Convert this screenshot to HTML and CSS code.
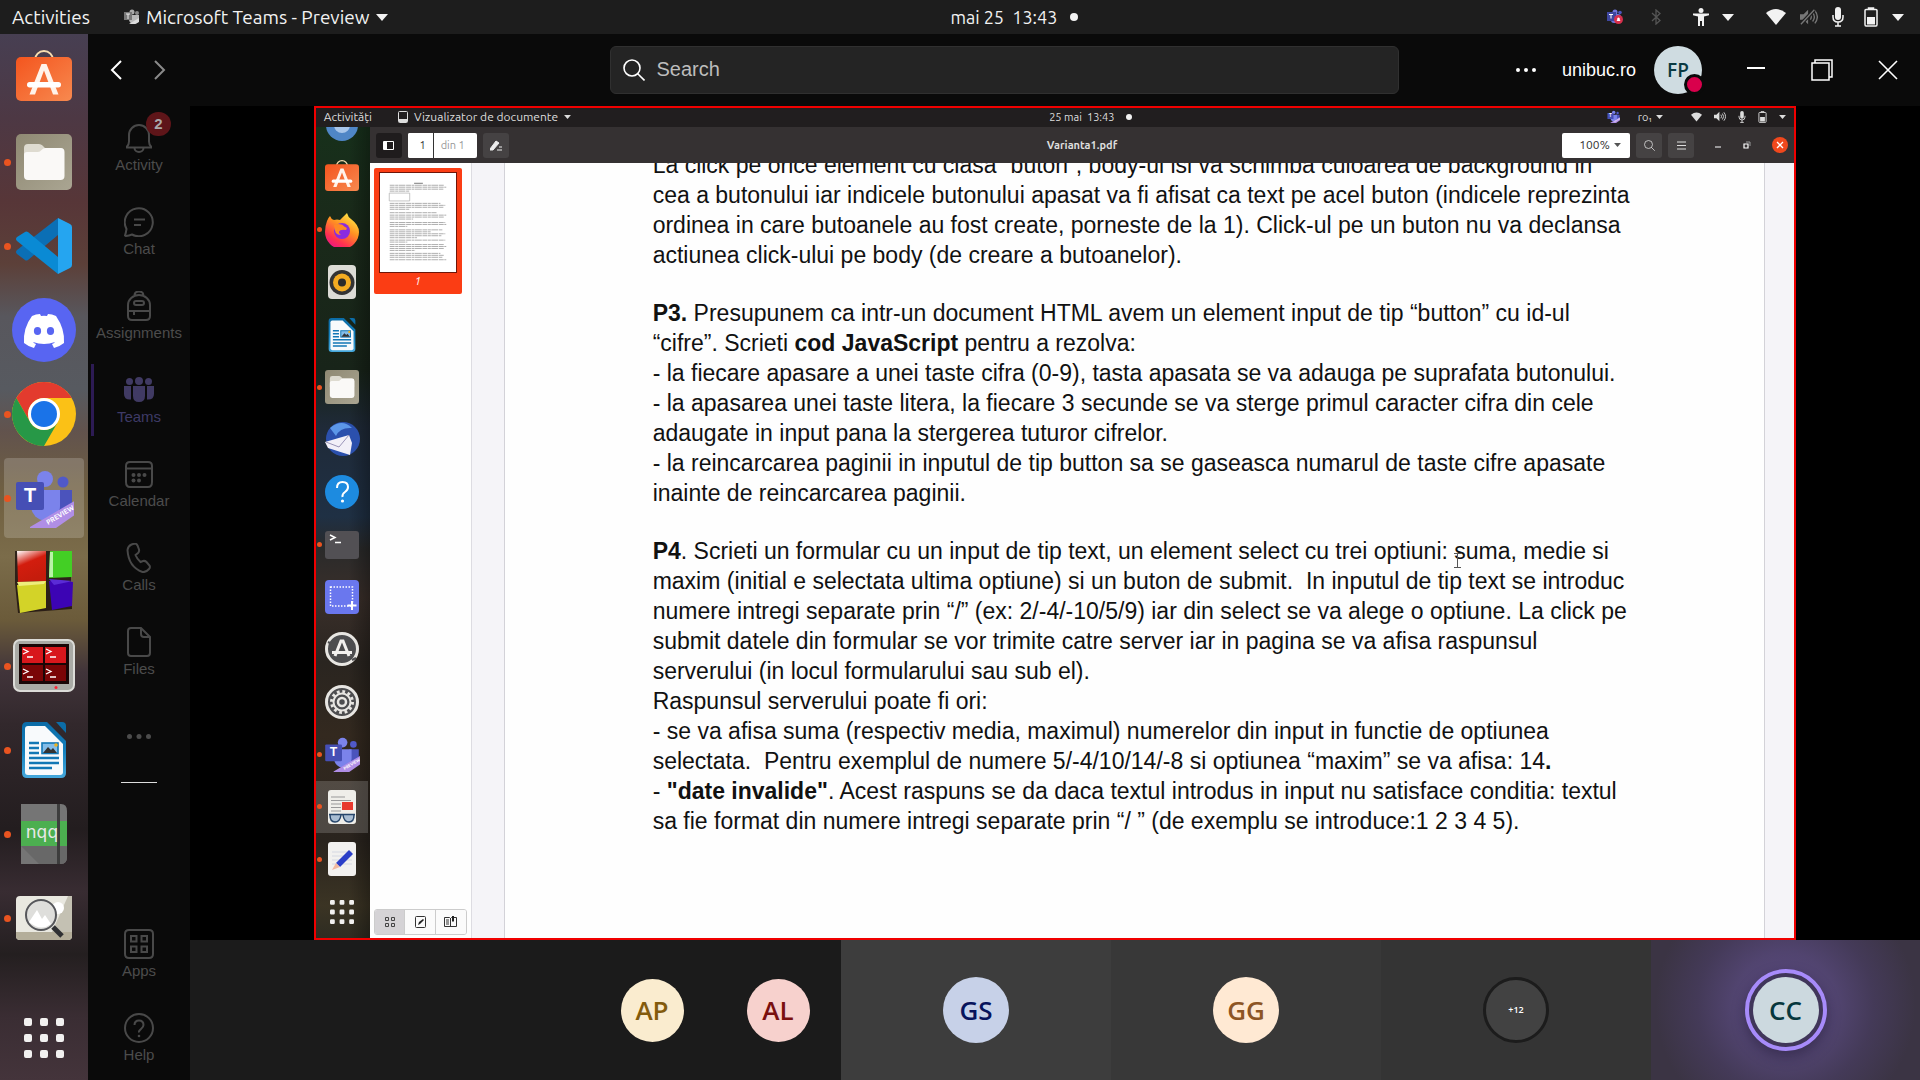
FILE: index.html
```html
<!DOCTYPE html>
<html lang="en">
<head>
<meta charset="utf-8">
<title>Microsoft Teams - Preview</title>
<link rel="stylesheet" href="styles.css">
</head>
<body>
<svg class="defs" width="0" height="0" aria-hidden="true">
  <defs>
    <linearGradient id="g-bag" x1="0" y1="0" x2="1" y2="1"><stop offset="0" stop-color="#f4551e"/><stop offset="1" stop-color="#f7894f"/></linearGradient>
    <linearGradient id="g-files" x1="0" y1="0" x2="1" y2="1"><stop offset="0" stop-color="#8f8973"/><stop offset="1" stop-color="#aaa592"/></linearGradient>
    <linearGradient id="g-writer" x1="0" y1="0" x2="0" y2="1"><stop offset="0" stop-color="#0b6ba6"/><stop offset=".5" stop-color="#1480bd"/><stop offset="1" stop-color="#45a8dc"/></linearGradient>
    <linearGradient id="g-fox" x1=".8" y1="0" x2=".2" y2="1"><stop offset="0" stop-color="#fff04a"/><stop offset=".4" stop-color="#ff9222"/><stop offset=".75" stop-color="#ff3150"/><stop offset="1" stop-color="#e8118b"/></linearGradient>
    <linearGradient id="g-red" x1="0" y1="0" x2=".4" y2="1"><stop offset="0" stop-color="#fff"/><stop offset=".45" stop-color="#d31d0e"/><stop offset="1" stop-color="#c41c0c"/></linearGradient>
    <symbol id="i-software" viewBox="0 4 56 56">
      <path d="M19 13a9 9 0 0 1 18 0" fill="none" stroke="#f8ddb0" stroke-width="2" transform="translate(0 1)"/>
      <rect y="11" width="56" height="44" rx="5" fill="url(#g-bag)"/>
      <path d="M13.500 48.500 25.500 18h5l12 30.500h-5.500L28 24.500 19 48.500z" fill="#fff3ea"/>
      <rect x="11" y="36" width="34" height="5.500" rx="2.700" fill="#fff"/>
    </symbol>
    <symbol id="i-files" viewBox="0 0 56 56">
      <rect width="56" height="56" rx="5" fill="url(#g-files)"/>
      <path d="M8 14q0-4 4-4h11q2 0 3.500 1.500L29 14h15q4 0 4 4v10H8z" fill="#dedbd0"/>
      <path d="M8 21q0-3 3-3h11q2 0 3.500-2 2-2 4-2h15q4 0 4 4v24q0 4-4 4H12q-4 0-4-4z" fill="#faf9f7"/>
    </symbol>
    <symbol id="i-writer" viewBox="0 0 56 56">
      <path d="M11 0h20l19 19v32q0 5-5 5H11q-5 0-5-5V5q0-5 5-5z" fill="url(#g-writer)"/>
      <path d="M12 4h17l18 18v28q0 3-3 3H12q-3 0-3-3V7q0-3 3-3z" fill="#f8fafc"/>
      <path d="M40 0h6q4 0 4 4v7z" fill="#0c6da8"/>
      <path d="M13 21h10M13 26h10M13 31h10M13 36h30M13 41h30M13 46h23" stroke="#1277b5" stroke-width="2.500"/>
      <rect x="26" y="21" width="16" height="10.500" fill="#84bde8" stroke="#1277b5" stroke-width="1.600"/>
      <path d="m27 31 5-6 3 3 2-2 4 5z" fill="#333"/><circle cx="40" cy="23" r="1.800" fill="#f0b21c"/>
    </symbol>
    <symbol id="i-teams" viewBox="0 0 60 60">
      <circle cx="31" cy="11" r="8" fill="#7b83eb"/><circle cx="49" cy="14" r="5.500" fill="#5059c9"/>
      <path d="M42 22h16v18q0 8-8 9h-8z" fill="#4b53bc"/>
      <path d="M17 22h29v16a14.500 14.500 0 0 1-29 0z" fill="#7b83eb"/>
      <rect x="2" y="14" width="28" height="28" rx="2" fill="#464fb5"/>
      <text x="16" y="34" class="glyph-t">T</text>
      <path d="M16 59 62 32v14L42 60H16z" fill="#b08ee6"/>
      <text x="34" y="57" class="glyph-preview" transform="rotate(-31 34 57)">PREVIEW</text>
    </symbol>
    <symbol id="i-tri" viewBox="0 0 12 7"><path d="M0 0h12L6 7z" fill="currentColor"/></symbol>
    <symbol id="i-wifi" viewBox="0 0 20 16"><path d="M10 16 0 4q10-8 20 0z" fill="currentColor"/></symbol>
    <symbol id="i-mic" viewBox="0 0 12 20"><rect x="3" width="6" height="13" rx="3" fill="currentColor"/><path d="M1 8v2q0 5 5 5t5-5V8M6 15v4M3 19h6" fill="none" stroke="currentColor" stroke-width="1.500"/></symbol>
    <symbol id="i-battery" viewBox="0 0 14 20"><path d="M4.500 2.500V1h5v1.500M2 2.500h10q1 0 1 1v14q0 1.500-1 1.500H2q-1 0-1-1.500v-14q0-1 1-1z" fill="none" stroke="currentColor" stroke-width="1.500"/><path d="M3 10h8v7.500H3z" fill="currentColor"/></symbol>
    <symbol id="i-sound" viewBox="0 0 20 18"><path d="M0 6h4l5-5v16l-5-5H0z" fill="currentColor"/><path d="M11.500 6q2 3 0 6M14 4q4 5 0 10M16.500 2q5.500 7 0 14" fill="none" stroke="currentColor" stroke-width="1.500"/></symbol>
    <symbol id="i-dots9" viewBox="0 0 40 40"><path d="M2 0h4q2 0 2 2v4q0 2-2 2H2Q0 8 0 6V2q0-2 2-2zm16 0h4q2 0 2 2v4q0 2-2 2h-4q-2 0-2-2V2q0-2 2-2zm16 0h4q2 0 2 2v4q0 2-2 2h-4q-2 0-2-2V2q0-2 2-2zM2 16h4q2 0 2 2v4q0 2-2 2H2q-2 0-2-2v-4q0-2 2-2zm16 0h4q2 0 2 2v4q0 2-2 2h-4q-2 0-2-2v-4q0-2 2-2zm16 0h4q2 0 2 2v4q0 2-2 2h-4q-2 0-2-2v-4q0-2 2-2zM2 32h4q2 0 2 2v4q0 2-2 2H2q-2 0-2-2v-4q0-2 2-2zm16 0h4q2 0 2 2v4q0 2-2 2h-4q-2 0-2-2v-4q0-2 2-2zm16 0h4q2 0 2 2v4q0 2-2 2h-4q-2 0-2-2v-4q0-2 2-2z" fill="#f2f1f0"/></symbol>
    <symbol id="i-search" viewBox="0 0 22 22"><circle cx="9" cy="9" r="8" fill="none" stroke="currentColor" stroke-width="1.600"/><path d="m14.500 14.500 7 7" stroke="currentColor" stroke-width="1.600"/></symbol>
  </defs>
</svg>

<header class="topbar">
  <div class="topbar-left">
    <button class="plain">Activities</button>
    <button class="plain app-menu">
      <svg width="16" height="16" viewBox="0 0 16 16"><circle cx="8" cy="3" r="2.500" fill="#aaa"/><circle cx="13" cy="4" r="2" fill="#888"/><path d="M6 6h9v5q-1 4-5 4t-5-4z" fill="#b8b8b8"/><rect y="3" width="8" height="8" fill="#777"/><path d="M2 5h4M4 5v5" stroke="#eee"/><path d="m5 15 10-6v4l-4 2z" fill="#ddd"/></svg>
      <span>Microsoft Teams - Preview</span>
      <svg width="12" height="7"><use href="#i-tri"/></svg>
    </button>
  </div>
  <div class="clock"><span>mai 25&nbsp; 13:43</span><i class="clock-dot"></i></div>
  <div class="tray">
    <svg width="16" height="16" viewBox="0 0 16 16"><circle cx="8" cy="3" r="2.500" fill="#6f76dc"/><circle cx="13" cy="3.500" r="1.800" fill="#4d55bd"/><rect x="4" y="5" width="10" height="9" rx="3" fill="#6a72d8"/><rect y="3" width="9" height="9" fill="#3f479f"/><path d="M2 5.500h4M4 5.500v4" stroke="#fff"/><circle cx="11.500" cy="10.500" r="4.500" fill="#d8304c"/><path d="M9.500 12h4l-.7-1V9.500q-1.300-2-2.600 0V11z" fill="#fff"/></svg>
    <svg class="dim bt" width="10" height="16" viewBox="0 0 10 16"><path d="m1 4 8 7.500L5 15V1l4 3.500L1 12" fill="none" stroke="currentColor" stroke-width="1.300"/></svg>
    <span class="tray-group">
      <svg width="16" height="18" viewBox="0 0 16 18"><circle cx="8" cy="2.500" r="2.500" fill="currentColor"/><path d="M0 5.500h16v1.700l-5 1.300V18H9v-5H7v5H5V8.500L0 7.200z" fill="currentColor"/></svg>
      <svg width="12" height="7"><use href="#i-tri"/></svg>
    </span>
    <span class="tray-group system">
      <svg width="20" height="16"><use href="#i-wifi"/></svg>
      <svg class="dim" width="18" height="18" viewBox="0 0 20 18"><use href="#i-sound" width="20" height="18"/><path d="M1 17 16 1" stroke="#1d1d1d" stroke-width="4"/><path d="M1 17 16 1" stroke="currentColor" stroke-width="1.500"/></svg>
      <svg class="tray-mic" width="12" height="20"><use href="#i-mic"/></svg>
      <svg width="14" height="20"><use href="#i-battery"/></svg>
      <svg width="12" height="7"><use href="#i-tri"/></svg>
    </span>
  </div>
</header>

<div class="desktop">
  <nav class="dock" aria-label="Dock">
    <button class="dock-item" aria-label="Ubuntu Software"><svg width="56" height="56"><use href="#i-software"/></svg></button>
    <button class="dock-item running" aria-label="Files"><svg width="56" height="56"><use href="#i-files"/></svg></button>
    <button class="dock-item running" aria-label="Visual Studio Code"><svg width="56" height="56" viewBox="0 0 56 56"><path d="M42 0v17L12 42q-2 1-3 0l-8-6q-2-2 0-4z" fill="#0b6fb5"/><path d="M42 56V39L12 14q-2-1-3 0l-8 5q-2 2 0 4z" fill="#0a8ad4"/><path d="M42 0l12 6q2 1 2 3v38q0 2-2 3l-12 6z" fill="#25a5f0"/></svg></button>
    <button class="dock-item" aria-label="Discord"><svg width="64" height="64" viewBox="0 0 64 64"><circle cx="32" cy="32" r="32" fill="#5865f2"/><path d="M20 18q4-2 8-2l1 2q3-.5 6 0l1-2q4 0 8 2 9 13 8 27-5 4-10 5l-2-4q2-.5 3-2-11 4-22 0 1 1.500 3 2l-2 4q-5-1-10-5-1-15 8-27z" fill="#fff"/><ellipse cx="25.500" cy="33" rx="3.600" ry="4" fill="#5865f2"/><ellipse cx="38.500" cy="33" rx="3.600" ry="4" fill="#5865f2"/></svg></button>
    <button class="dock-item running" aria-label="Chrome"><svg width="64" height="64" viewBox="0 0 64 64"><circle cx="32" cy="32" r="32" fill="#fbc116"/><path d="M4.300 16A32 32 0 0 1 59.700 16H32a16 16 0 0 0-13.900 24z" fill="#e33b2e"/><path d="M4.300 16 18.100 40A16 16 0 0 0 45.900 40L32 64A32 32 0 0 1 4.300 16z" fill="#279847"/><circle cx="32" cy="32" r="16" fill="#fff"/><circle cx="32" cy="32" r="13" fill="#1a73e8"/></svg></button>
    <button class="dock-item running active" aria-label="Microsoft Teams"><svg width="60" height="60"><use href="#i-teams"/></svg></button>
    <button class="dock-item" aria-label="Code::Blocks"><svg class="cubes" width="60" height="64" viewBox="0 0 60 64"><path d="M1 1h56v30l1 28-54 4-3-30z" fill="#150a0a" opacity=".75"/><path d="M3 1h29v30L4 32z" fill="url(#g-red)"/><path d="M36 1h22v26l-23 1z" fill="#43cf25"/><path d="m36 2h3v25h-4z" fill="#b9f2a8"/><path d="m3 35 29-4v27L6 63z" fill="#d3d328"/><path d="m3 32 29-1-2 3-25 2z" fill="#eeee7c"/><path d="m35 31 24 1-1 24-20 4z" fill="#3c04b4"/><path d="m35 29 24 2-19 4z" fill="#5a2bd6"/></svg></button>
    <button class="dock-item running" aria-label="Terminator"><svg width="62" height="54" viewBox="0 0 62 54"><rect x="1" y="1" width="60" height="51" rx="6" fill="#a9aaa5" stroke="#dcdcd8" stroke-width="2"/><rect x="6" y="5" width="50" height="40" fill="#190606"/><path d="M9 8h21v16H9zM32 8h21v16H32z" fill="#d8171c"/><path d="M9 26h21v16H9zM32 26h21v16H32z" fill="#7a0506"/><path d="m10 10 5 2.500-5 2.500M14 18h6M33 10l5 2.500-5 2.500M37 18h6M10 30l5 2.500-5 2.500M14 38h6M33 30l5 2.500-5 2.500M37 38h6" fill="none" stroke="#fff" stroke-width="1.300"/><circle cx="43" cy="48.500" r="1.500" fill="#f23"/></svg></button>
    <button class="dock-item running" aria-label="LibreOffice Writer"><svg width="56" height="56"><use href="#i-writer"/></svg></button>
    <button class="dock-item running" aria-label="nqq"><svg width="46" height="60" viewBox="0 0 46 60"><path d="M0 0h40q6 0 6 7v46q0 7-6 7H0z" fill="#757575"/><path d="M0 42h46v11q0 7-6 7H18z" fill="#686868"/><path d="M0 17h46v25H0z" fill="#4caf50"/><path d="M36 0h3v60h-3z" fill="#3d3d3d"/><text x="21" y="34" class="glyph-nqq">nqq</text></svg></button>
    <button class="dock-item running" aria-label="Image Viewer"><svg width="56" height="44" viewBox="0 0 56 44"><rect width="56" height="44" rx="4" fill="#e9e8e0"/><path d="m36 36 16-36h4v36z" fill="#c4c1b3"/><path d="M0 36h56v4q0 4-4 4H4q-4 0-4-4z" fill="#b4ae9a"/><circle cx="42" cy="12" r="6" fill="#fff"/><circle cx="25" cy="19" r="15" fill="#dededb" stroke="#55565a" stroke-width="2"/><path d="m13 26 8-12 5 9 3-4 6 9q-10 8-22-2z" fill="#fff"/><path d="m37 31 9 9" stroke="#2f3033" stroke-width="5"/></svg></button>
    <button class="dock-item show-apps" aria-label="Show Applications"><svg width="40" height="40"><use href="#i-dots9"/></svg></button>
  </nav>

  <div class="teams">
    <header class="teams-header">
      <div class="history">
        <button class="plain" aria-label="Back"><svg width="12" height="20" viewBox="0 0 12 20"><path d="m11 1-9 9 9 9" fill="none" stroke="#fff" stroke-width="2"/></svg></button>
        <button class="plain" aria-label="Forward"><svg width="12" height="20" viewBox="0 0 12 20"><path d="m1 1 9 9-9 9" fill="none" stroke="#8a8a8a" stroke-width="2"/></svg></button>
      </div>
      <label class="search"><svg width="22" height="22"><use href="#i-search"/></svg><input type="text" placeholder="Search" aria-label="Search"></label>
      <div class="account">
        <button class="plain" aria-label="More"><svg width="20" height="4" viewBox="0 0 20 4"><path d="M0 2a2 2 0 0 1 4 0 2 2 0 0 1-4 0m8 0a2 2 0 0 1 4 0 2 2 0 0 1-4 0m8 0a2 2 0 0 1 4 0 2 2 0 0 1-4 0" fill="#fff"/></svg></button>
        <span class="tenant">unibuc.ro</span>
        <button class="avatar me">FP<i class="presence"></i></button>
        <div class="window-controls">
          <button class="plain" aria-label="Minimize"><svg width="20" height="22" viewBox="0 0 20 22"><path d="M1 9h18" stroke="#fff" stroke-width="2"/></svg></button>
          <button class="plain" aria-label="Restore"><svg width="22" height="22" viewBox="0 0 22 22"><path d="M1 4h17v17H1zM4 4V1h17v17h-3" fill="none" stroke="#fff" stroke-width="1.500"/></svg></button>
          <button class="plain" aria-label="Close"><svg width="20" height="20" viewBox="0 0 20 20"><path d="m1 1 18 18M19 1 1 19" stroke="#fff" stroke-width="1.600"/></svg></button>
        </div>
      </div>
    </header>

    <div class="teams-body">
      <nav class="rail" aria-label="Teams">
        <button class="rail-item"><span class="rail-icon"><svg width="30" height="30" viewBox="0 0 30 30"><path d="M3 24.500v-1q2-2 2-5V12a10 10 0 0 1 20 0v6.500q0 3 2 5v1zM10.500 25a4.500 4 0 0 0 9 0"/></svg><b class="badge">2</b></span>Activity</button>
        <button class="rail-item"><span class="rail-icon"><svg width="30" height="30" viewBox="0 0 30 30"><path d="M2 29 1 28.500q1-3 1.500-6.500a14 14 0 1 1 5.500 5.500Q5 28.700 2 29zM10 12.500h11M10 18h7"/></svg></span>Chat</button>
        <button class="rail-item"><span class="rail-icon"><svg width="30" height="30" viewBox="0 0 30 30"><path d="M4 14a11 10 0 0 1 22 0v11q0 4-4 4H8q-4 0-4-4zM10.500 4.500q0-4 4.500-4t4.500 4M10 12q0-2 2-2h6q2 0 2 2t-2 2h-6q-2 0-2-2zM4 20h22M10 20v4"/></svg></span>Assignments</button>
        <button class="rail-item selected"><span class="rail-icon"><svg width="30" height="30" viewBox="0 0 30 30"><circle cx="15" cy="6" r="4"/><circle cx="5.500" cy="6.500" r="3.500"/><circle cx="24.500" cy="6.500" r="3.500"/><path d="M9 11h12v10q0 6-6 6t-6-6zM0 11h7v13.500Q0 25 0 19zM23 11h7v8q0 6-7 5.500z"/></svg></span>Teams</button>
        <button class="rail-item"><span class="rail-icon"><svg width="30" height="30" viewBox="0 0 30 30"><path d="M6 3h18q4 0 4 4v16q0 5-4 5H6q-4 0-4-5V7q0-4 4-4zM2 9.500h26"/><g class="solid"><circle cx="9.500" cy="16" r="2"/><circle cx="15" cy="16" r="2"/><circle cx="20.500" cy="16" r="2"/><circle cx="9.500" cy="21.500" r="2"/><circle cx="15" cy="21.500" r="2"/></g></svg></span>Calendar</button>
        <button class="rail-item"><span class="rail-icon"><svg width="30" height="30" viewBox="0 0 30 30"><path d="m7.500 1.500 3-1q2 0 3 2l1.500 4q.5 2-1 3.500L11.500 12q1.500 4 5 7l2.500-1q2-.5 3.500 1l3 3.500q1 2-.5 3.500-3 3.500-6.500 3-14-5-15-22 .5-4 4-5.500z"/></svg></span>Calls</button>
        <button class="rail-item"><span class="rail-icon"><svg width="30" height="30" viewBox="0 0 30 30"><path d="M7 1h10l9 9v16q0 3-3 3H7q-3 0-3-3V4q0-3 3-3zM17 1v6q0 3 3 3h6"/></svg></span>Files</button>
        <button class="rail-more" aria-label="More apps"><svg width="24" height="5" viewBox="0 0 24 5"><circle cx="2.500" cy="2.500" r="2.500"/><circle cx="12" cy="2.500" r="2.500"/><circle cx="21.500" cy="2.500" r="2.500"/></svg></button>
        <hr class="rail-rule">
        <button class="rail-item rail-bottom"><span class="rail-icon"><svg width="30" height="30" viewBox="0 0 30 30"><path d="M5 1h20q4 0 4 4v20q0 4-4 4H5q-4 0-4-4V5q0-4 4-4zM7 7h5.500v5.500H7zM17.500 7H23v5.500h-5.500zM7 17.500h5.500V23H7zM17.500 17.500H23V23h-5.500z"/></svg></span>Apps</button>
        <button class="rail-item"><span class="rail-icon"><svg width="30" height="30" viewBox="0 0 30 30"><circle cx="15" cy="15" r="14"/><path d="M10.500 12q0-4.500 4.500-4.500t4.500 4.500q0 2-2.500 4t-2 3.500"/><circle class="solid" cx="15" cy="23" r="1.300"/></svg></span>Help</button>
      </nav>

      <main class="call">
        <section class="stage">
          <div class="shared" lang="ro">
            <div class="s-topbar">
              <div class="s-left"><span>Activităţi</span><span class="s-app"><svg width="10" height="12" viewBox="0 0 10 12"><rect x=".5" y=".5" width="9" height="11" rx="1" fill="none" stroke="#ddd"/><path d="M1 8h8v3H1z" fill="#ddd"/></svg><span>Vizualizator de documente</span><svg width="7" height="4" viewBox="0 0 12 7"><use href="#i-tri"/></svg></span></div>
              <div class="s-clock"><span>25 mai&nbsp; 13:43</span><i class="clock-dot small"></i></div>
              <div class="s-tray">
                <svg class="s-teams" width="13" height="13" viewBox="0 0 60 60"><use href="#i-teams" width="60" height="60"/></svg>
                <span class="s-lang">ro₁ <svg width="7" height="4" viewBox="0 0 12 7"><use href="#i-tri"/></svg></span>
                <svg width="11" height="10"><use href="#i-wifi"/></svg>
                <svg width="12" height="11"><use href="#i-sound"/></svg>
                <svg width="8" height="12"><use href="#i-mic"/></svg>
                <svg width="9" height="12"><use href="#i-battery"/></svg>
                <svg width="7" height="4" viewBox="0 0 12 7"><use href="#i-tri"/></svg>
              </div>
            </div>
            <div class="s-main">
              <div class="s-dock">
                <span class="s-partial"><svg width="32" height="32" viewBox="0 0 32 32"><circle cx="16" cy="16" r="16" fill="#4f86c6"/><circle cx="16" cy="16" r="8" fill="#a8c6ea"/></svg></span>
                <span class="s-item"><svg width="34" height="34"><use href="#i-software"/></svg></span>
                <span class="s-item running"><svg width="34" height="34" viewBox="0 0 34 34"><path d="M2 8q1-3 3-5 1 3 4 4 3-1 6 0 4-4 7-7 1 4 4 6 8 6 8 13a17 17 0 0 1-34 0Q0 13 2 8z" fill="url(#g-fox)"/><circle cx="17" cy="18" r="8" fill="#8a2be0"/><path d="M9 12q7-3 11 2 3 1 1 3-6-1-7 2 0 2 2 3-7 0-7-10z" fill="#ff8a24"/></svg></span>
                <span class="s-item"><svg width="28" height="34" viewBox="0 0 28 34"><rect width="28" height="34" rx="4" fill="#dcdcd6"/><circle cx="14" cy="17.500" r="12.500" fill="#333"/><circle cx="14" cy="17.500" r="9" fill="#f4ac22"/><circle cx="14" cy="17.500" r="4" fill="#2b2b2b"/></svg></span>
                <span class="s-item"><svg width="34" height="34"><use href="#i-writer"/></svg></span>
                <span class="s-item running"><svg width="34" height="34"><use href="#i-files"/></svg></span>
                <span class="s-item"><svg width="36" height="36" viewBox="0 0 36 36"><circle cx="19" cy="17" r="17" fill="#2b50ad"/><path d="M6 6q12-10 22 0-12-1-16 8z" fill="#5c97e8"/><path d="m1 20 24-7 3 8-2 12L4 26z" fill="#f2f0f8"/><path d="m2 20 13 5 10-12" fill="none" stroke="#9a94b8"/></svg></span>
                <span class="s-item"><svg width="34" height="34" viewBox="0 0 34 34"><circle cx="17" cy="17" r="17" fill="#1d8be0"/><path d="M12 13q0-6 5.500-6t5.500 5q0 3-3 5t-2.500 5" fill="none" stroke="#fff" stroke-width="2"/><circle cx="17.500" cy="26" r="1.600" fill="#fff"/></svg></span>
                <span class="s-item running"><svg width="34" height="28" viewBox="0 0 34 28"><rect width="34" height="28" rx="3" fill="#525054"/><path d="m5 4 5 2.500L5 9M10 11.500h6" fill="none" stroke="#fff" stroke-width="1.500"/></svg></span>
                <span class="s-item"><svg width="34" height="34" viewBox="0 0 34 34"><rect width="34" height="34" rx="4" fill="#6a77ee"/><path d="M5.500 7h22v19h-22z" fill="none" stroke="#fff" stroke-width="1.500" stroke-dasharray="1.500 1.500"/><path d="M27 21v9M22.500 25.500h9" stroke="#fff" stroke-width="2"/></svg></span>
                <span class="s-item"><svg width="34" height="34" viewBox="0 0 34 34"><circle cx="17" cy="17" r="15.500" fill="#4d4d4f" stroke="#e8e6e2" stroke-width="3"/><path d="m3 10 4 2M27 28l4-2" stroke="#4d4d4f" stroke-width="2"/><path d="m10 24 6-15h2l6 15M7 20.500h20" fill="none" stroke="#f2f0ee" stroke-width="3"/></svg></span>
                <span class="s-item"><svg width="34" height="34" viewBox="0 0 34 34"><circle cx="17" cy="17" r="15.500" fill="#4d4d4f" stroke="#e8e6e2" stroke-width="3"/><circle cx="17" cy="17" r="10.500" fill="none" stroke="#e8e6e2" stroke-width="3" stroke-dasharray="2.750 2.750"/><circle cx="17" cy="17" r="8.500" fill="none" stroke="#e8e6e2" stroke-width="2"/><circle cx="17" cy="17" r="4" fill="none" stroke="#e8e6e2" stroke-width="2.500"/></svg></span>
                <span class="s-item running"><svg width="36" height="36"><use href="#i-teams"/></svg></span>
                <span class="s-item running current"><svg width="28" height="34" viewBox="0 0 28 34"><rect width="28" height="34" rx="3" fill="#efeee9"/><path d="M3 7h14M3 10.500h20M3 14h10M3 17.500h10M3 21h10" stroke="#999"/><path d="M14 12h11v8H14z" fill="#e8392e"/><path d="M1 24.500h26M2 25q0 7 5 7t6-7M15 25q1 7 6 7t5-7" fill="#a9bdd2" stroke="#27466b" stroke-width="1.500"/></svg></span>
                <span class="s-item running"><svg width="28" height="34" viewBox="0 0 28 34"><rect width="28" height="34" rx="3" fill="#f2f1ef"/><path d="M4 10h20M4 14h20M4 18h20M4 22h20" stroke="#d5d8e2"/><path d="m8 21 13-13 4 4-13 13z" fill="#2b3fc8"/><path d="m8 21 4 4-8 3z" fill="#f0b8a0"/></svg></span>
                <span class="s-item"><svg width="24" height="24"><use href="#i-dots9"/></svg></span>
              </div>
              <div class="viewer">
                <div class="v-header">
                  <div class="v-left">
                    <button class="v-btn pressed" aria-label="Panou lateral"><svg width="11" height="9" viewBox="0 0 11 9"><path d="M.5.500h10v8H.5z" fill="none" stroke="#fff"/><path d="M1 1h3v7H1z" fill="#fff"/></svg></button>
                    <span class="v-pages"><input type="text" value="1" aria-label="Pagina"><span>din 1</span></span>
                    <button class="v-btn" aria-label="Adnotare"><svg width="12" height="11" viewBox="0 0 12 11"><path d="m0 9 6-8 3 2-6 7H0zM7 10h5M9 7h3" fill="#eee" stroke="#eee"/></svg></button>
                  </div>
                  <strong>Varianta1.pdf</strong>
                  <div class="v-right">
                    <span class="v-zoom"><select aria-label="Zoom"><option>100%</option></select><svg width="7" height="4" viewBox="0 0 12 7"><use href="#i-tri"/></svg></span>
                    <button class="v-btn" aria-label="Caută"><svg width="11" height="11"><use href="#i-search"/></svg></button>
                    <button class="v-btn" aria-label="Meniu"><svg width="9" height="9" viewBox="0 0 9 9"><path d="M0 1h9M0 4.500h9M0 8h9" stroke="#ddd"/></svg></button>
                    <span class="v-controls">
                      <button class="plain" aria-label="Minimizează"><svg width="8" height="8" viewBox="0 0 8 8"><path d="M1 6h6" stroke="#fff"/></svg></button>
                      <button class="plain" aria-label="Restaurează"><svg width="8" height="8" viewBox="0 0 8 8"><path d="M1 3h4v4H1z" fill="none" stroke="#fff" stroke-width="1.200"/><path d="M3 1h4v4" fill="none" stroke="#999"/></svg></button>
                      <button class="plain" aria-label="Închide"><svg width="16" height="16" viewBox="0 0 16 16"><circle cx="8" cy="8" r="8" fill="#f0481d"/><path d="m5 5 6 6M11 5l-6 6" stroke="#fff" stroke-width="1.300"/></svg></button>
                    </span>
                  </div>
                </div>
                <div class="v-body">
                  <aside class="v-side">
                    <figure class="thumb">
                      <svg viewBox="0 0 78 101" preserveAspectRatio="none"><rect width="78" height="101" fill="#fff"/><path d="M35 10.500h9" stroke="#777"/><path d="M9.500 20.500h21v8h-21z" fill="none" stroke="#aaa" stroke-width=".7"/><path d="M10 12.500h56M10 14.500h58M10 16.500h55M10 18.500h20M10 31h52M10 33h57M10 35h55M10 37h20M10 40.500h48M10 43h58M10 45h56M10 47h24M10 50.500h57M10 52.500h58M10 54.500h18M10 58h54M10 60h42M10 62h57M10 64h53M10 66h28M10 68.500h57M10 70.500h18M10 73h56M10 75h58M10 77h56M10 79h26M10 82h52M10 84h56M10 86h54M10 88.500h58" stroke="#999" stroke-width=".8" stroke-dasharray="5 .6 3 .5 7 .7"/></svg>
                      <figcaption>1</figcaption>
                    </figure>
                    <div class="v-switch">
                      <button class="on" aria-label="Miniaturi"><svg width="10" height="10" viewBox="0 0 10 10"><path d="M.5.500h3v3h-3zM6.500.500h3v3h-3zM.5 6.500h3v3h-3zM6.500 6.500h3v3h-3z" fill="none" stroke="#444"/></svg></button>
                      <button aria-label="Adnotări"><svg width="11" height="12" viewBox="0 0 11 12"><rect x=".5" y=".5" width="10" height="11" rx="1" fill="none" stroke="#333"/><path d="m3 9 1-3 4-3 1 1-4 4z" fill="#222"/></svg></button>
                      <button aria-label="Semne de carte"><svg width="13" height="12" viewBox="0 0 13 12"><path d="M.5 1.500h5l1 1 1-1h5v9H.5zM6.500 2v9" fill="none" stroke="#333"/><path d="M2 4h3M2 6h3M2 8h3" stroke="#333"/><path d="M8 0h2v6L9 5 8 6z" fill="#222"/></svg></button>
                    </div>
                  </aside>
                  <div class="v-canvas">
                    <article class="sheet">
                      <p>La click pe orice element cu clasa “buton”, body-ul isi va schimba culoarea de background in<br>cea a butonului iar indicele butonului apasat va fi afisat ca text pe acel buton (indicele reprezinta<br>ordinea in care butoanele au fost create, porneste de la 1). Click-ul pe un buton nu va declansa<br>actiunea click-ului pe body (de creare a butoanelor).</p>
                      <p><b>P3.</b> Presupunem ca intr-un document HTML avem un element input de tip “button” cu id-ul<br>“cifre”. Scrieti <b>cod JavaScript</b> pentru a rezolva:<br>- la fiecare apasare a unei taste cifra (0-9), tasta apasata se va adauga pe suprafata butonului.<br>- la apasarea unei taste litera, la fiecare 3 secunde se va sterge primul caracter cifra din cele<br>adaugate in input pana la stergerea tuturor cifrelor.<br>- la reincarcarea paginii in inputul de tip button sa se gaseasca numarul de taste cifre apasate<br>inainte de reincarcarea paginii.</p>
                      <p><b>P4</b>. Scrieti un formular cu un input de tip text, un element select cu trei optiuni: <span class="pointer-at">suma<svg class="ibeam" width="7" height="15" viewBox="0 0 7 15"><path d="M0 .5h7M0 14.500h7M3.500 0v15" stroke="#555"/></svg></span>, medie si<br>maxim (initial e selectata ultima optiune) si un buton de submit.&nbsp; In inputul de tip text se introduc<br>numere intregi separate prin “/” (ex: 2/-4/-10/5/9) iar din select se va alege o optiune. La click pe<br>submit datele din formular se vor trimite catre server iar in pagina se va afisa raspunsul<br>serverului (in locul formularului sau sub el).<br>Raspunsul serverului poate fi ori:<br>- se va afisa suma (respectiv media, maximul) numerelor din input in functie de optiunea<br>selectata.&nbsp; Pentru exemplul de numere 5/-4/10/14/-8 si optiunea “maxim” se va afisa: 14<b>.</b><br>- <b>"date invalide"</b>. Acest raspuns se da daca textul introdus in input nu satisface conditia: textul<br>sa fie format din numere intregi separate prin “/ ” (de exemplu se introduce:1 2 3 4 5).</p>
                    </article>
                  </div>
                </div>
              </div>
            </div>
          </div>
        </section>

        <footer class="people">
          <div class="audio-only"><span class="slot"><span class="avatar ap">AP</span></span><span class="slot"><span class="avatar al">AL</span></span></div>
          <div class="tile t1"><span class="avatar big gs">GS</span></div>
          <div class="tile t2"><span class="avatar big gg">GG</span></div>
          <div class="tile t3"><button class="avatar big more">+12</button></div>
          <div class="tile t4"><span class="speaking"><span class="avatar big cc">CC</span></span></div>
        </footer>
      </main>
    </div>
  </div>
</div>
</body>
</html>
```
FILE: styles.css
```css
* { box-sizing: border-box; }

:root {
  --ui: Ubuntu, "Noto Sans", sans-serif;
  --text: "Liberation Sans", Arial, sans-serif;
}

body {
  margin: 0;
  min-height: 100vh;
  display: flex;
  flex-direction: column;
  background: #000;
  color: #fff;
  font-family: var(--text);
}

svg { display: block; flex: none; }
button { font: inherit; color: inherit; }
.defs { position: absolute; }

.plain {
  display: flex;
  align-items: center;
  padding: 0;
  border: 0;
  background: none;
}

.glyph-t { font: bold 21px var(--ui); fill: #fff; text-anchor: middle; }
.glyph-preview { font: bold 7px var(--ui); fill: #fff; }
.glyph-nqq { font: 17px "DejaVu Sans", sans-serif; fill: #e8e8e8; text-anchor: middle; }

/* System bar */
.topbar {
  display: grid;
  grid-template-columns: 49.6% auto 1fr;
  align-items: center;
  height: 34px;
  padding: 0 16px 0 12px;
  background: #1d1d1d;
  color: #f2f2f2;
  font: 18px/24px var(--ui);
}
.topbar-left { display: flex; gap: 34px; font-size: 19px; }
.app-menu { gap: 6px; }
.clock { display: flex; align-items: center; gap: 13px; }
.clock-dot { width: 8px; height: 8px; border-radius: 50%; background: #f2f2f2; }
.clock-dot.small { width: 6px; height: 6px; }
.tray { display: flex; justify-content: flex-end; align-items: center; gap: 28px; }
.tray-group { display: flex; align-items: center; gap: 13px; margin-left: 4px; }
.tray-group.system { gap: 14px; }
.tray-mic { margin-right: 6px; }
.dim { color: #777; }
.bt { color: #555; }

.desktop { flex: 1; display: flex; }

/* Dock */
.dock {
  flex: none;
  width: 88px;
  display: flex;
  flex-direction: column;
  padding: 2px 0 0;
  background: linear-gradient(#473f52 0, #4d3844 8%, #573638 16%, #5c4039 22%, #58575d 27%, #575a60 34%, #62534d 38%, #706041 44%, #7b6c4a 50%, #6b5b3a 56%, #41343a 61%, #32282c 66%, #231d1f 76%, #382c32 82%, #241f20 88%, #3a2d33 94%, #44343b 100%);
}
.dock-item {
  position: relative;
  display: flex;
  align-items: center;
  justify-content: center;
  width: 80px;
  height: 80px;
  margin: 2px 4px;
  padding: 0;
  border: 0;
  border-radius: 4px;
  background: none;
}
.dock-item.active { background: rgba(255, 255, 255, .18); }
.dock-item.running::before {
  content: "";
  position: absolute;
  left: 0;
  width: 7px;
  height: 7px;
  border-radius: 50%;
  background: #e95420;
}
.show-apps { margin-top: auto; }

/* Teams window */
.teams { flex: 1; min-width: 0; display: flex; flex-direction: column; background: #0a0a0a; }
.teams-header {
  display: grid;
  grid-template-columns: 1fr minmax(200px, 789px) 1fr;
  align-items: center;
  height: 72px;
  padding: 0 22px;
}
.history { display: flex; gap: 32px; }
.search {
  display: flex;
  align-items: center;
  gap: 12px;
  height: 48px;
  padding: 0 12px;
  border: 1px solid #303030;
  border-radius: 6px;
  background: #242424;
}
.search input {
  flex: 1;
  padding: 0 0 2px;
  border: 0;
  background: none;
  color: #fff;
  font: 20px/24px var(--text);
}
.search input::placeholder { color: #bdbdbd; }
.account { display: flex; justify-content: flex-end; align-items: center; }
.tenant { margin: 0 18px 0 26px; font-size: 18px; }
.window-controls { display: flex; align-items: center; gap: 45px; margin-left: 44px; }

.avatar {
  display: flex;
  align-items: center;
  justify-content: center;
  width: 63px;
  height: 63px;
  padding: 0;
  border: 0;
  border-radius: 50%;
  font: 600 26px/32px "Open Sans", sans-serif;
}
.avatar.big { width: 66px; height: 66px; }
.avatar.me { position: relative; width: 48px; height: 48px; font-size: 19px; background: #cfdce1; color: #0b3a42; }
.presence {
  position: absolute;
  right: -3px;
  bottom: -1px;
  width: 21px;
  height: 21px;
  border: 3px solid #0a0a0a;
  border-radius: 50%;
  background: #d9004c;
}

.teams-body { flex: 1; display: flex; }

/* App rail */
.rail { flex: none; width: 102px; display: flex; flex-direction: column; align-items: center; }
.rail-item {
  display: flex;
  flex-direction: column;
  align-items: center;
  gap: 3px;
  width: 102px;
  height: 84px;
  padding: 17px 0 0;
  border: 0;
  background: none;
  color: #4c4c4c;
  font: 15px/18px var(--text);
}
.rail-icon { position: relative; }
.rail-icon svg { fill: none; stroke: #494949; stroke-width: 2; }
.rail-icon .solid { fill: #494949; stroke: none; }
.badge {
  position: absolute;
  top: -11px;
  right: -17px;
  width: 25px;
  height: 24px;
  border-radius: 12px;
  background: #5e1519;
  color: #aaa;
  font: bold 15px/24px var(--text);
  text-align: center;
}
.rail-item.selected {
  color: #3e3a66;
  background: linear-gradient(#2d1b54, #2d1b54) 3px 6px / 3px 72px no-repeat;
}
.rail-item.selected svg { fill: #403a63; stroke: none; }
.rail-more { display: flex; margin-top: 28px; padding: 12px; border: 0; background: none; fill: #4c4c4c; }
.rail-rule { width: 36px; height: 1px; margin: 31px 0 0; border: 0; background: #ddd; }
.rail-bottom { margin-top: auto; }

/* Call area */
.call { flex: 1; min-width: 0; display: flex; flex-direction: column; }
.stage { flex: 1; display: flex; justify-content: center; background: #000; }

.shared {
  aspect-ratio: 16 / 9;
  display: flex;
  flex-direction: column;
  min-height: 0;
  overflow: hidden;
  border: 2px solid #f00000;
  background: #231f20;
  font: 11px/16px var(--ui);
  color: #ddd;
}
.s-topbar {
  display: grid;
  grid-template-columns: 49.6% auto 1fr;
  align-items: center;
  height: 19px;
  padding: 0 8px 2px;
  background: #211e1f;
}
.s-left, .s-app, .s-clock, .s-tray, .s-lang { display: flex; align-items: center; }
.s-left { gap: 26px; font-size: 12px; }
.s-app { gap: 6px; }
.s-clock { gap: 12px; }
.s-tray { justify-content: flex-end; gap: 12px; }
.s-lang { gap: 4px; margin: 0 16px 0 6px; }

.s-main { flex: 1; display: flex; min-height: 0; }
.s-dock {
  flex: none;
  width: 54px;
  display: flex;
  flex-direction: column;
  padding-right: 2px;
  background: linear-gradient(90deg, rgba(0, 0, 0, 0) 60%, rgba(0, 0, 0, .3)), linear-gradient(#17301b 0, #1a2a1a 12%, #182419 30%, #1f2a38 37%, #1f3044 48%, #2a2a2a 52%, #3a2f2a 58%, #2a2520 66%, #33291f 75%, #2a241e 88%, #3b3424 96%, #2e2c22 100%);
}
.s-partial { flex: none; height: 24px; display: flex; justify-content: center; align-items: flex-end; padding-bottom: 10px; overflow: hidden; }
.s-item { position: relative; flex: 1; display: flex; align-items: center; justify-content: center; }
.s-item.current { background: rgba(255, 255, 255, .17); }
.s-item.running::before {
  content: "";
  position: absolute;
  left: 1px;
  width: 5px;
  height: 5px;
  border-radius: 50%;
  background: #e95420;
}

.viewer { flex: 1; min-width: 0; display: flex; flex-direction: column; }
.v-header {
  display: grid;
  grid-template-columns: 1fr auto 1fr;
  align-items: center;
  height: 36px;
  padding: 0 6px;
  background: #353132;
}
.v-left, .v-right, .v-controls { display: flex; align-items: center; }
.v-left { gap: 6px; }
.v-right { justify-content: flex-end; gap: 6px; }
.v-controls { gap: 21px; margin-left: 14px; }
.v-btn {
  display: flex;
  align-items: center;
  justify-content: center;
  width: 26px;
  height: 25px;
  padding: 0;
  border: 0;
  border-radius: 3px;
  background: #454243;
  color: #ddd;
}
.v-btn.pressed { background: #1f1c1d; }
.v-pages { display: flex; height: 25px; border-radius: 2px; background: #fff; overflow: hidden; line-height: 25px; color: #999; }
.v-pages input {
  width: 26px;
  padding: 0 7px 0 0;
  border: 0;
  border-right: 1px solid #333;
  background: #fff;
  color: #333;
  font: inherit;
  text-align: right;
}
.v-pages span { width: 43px; padding-left: 7px; }
.v-zoom { display: flex; align-items: center; height: 25px; padding: 0 9px 0 17px; border-radius: 2px; background: #fff; color: #555; }
.v-zoom select { appearance: none; width: 35px; padding: 0; border: 0; background: none; color: #333; font: 12px/16px var(--ui); }

.v-body { flex: 1; display: flex; min-height: 0; background: #f5f4f8; }
.v-side { flex: none; width: 101px; display: flex; flex-direction: column; justify-content: space-between; padding: 5px 4px 3px; background: #fefefe; }
.thumb { width: 88px; margin: 0; padding: 4px 5px; border-radius: 2px; background: #fb3d14; text-align: center; font-style: italic; color: #fff; }
.thumb svg { width: 78px; height: 101px; border: 1px solid #6e1508; }
.thumb figcaption { line-height: 17px; }
.v-switch { display: flex; width: 93px; border: 1px solid #ccc; border-radius: 3px; overflow: hidden; }
.v-switch button { flex: 1; display: flex; align-items: center; justify-content: center; height: 24px; padding: 0; border: 0; background: #fbfbfb; }
.v-switch button + button { border-left: 1px solid #ccc; }
.v-switch .on { background: #d5d3d6; }

.v-canvas { flex: 1; min-width: 0; padding: 0 29px 0 32px; border-left: 1px solid #dddce2; overflow: hidden; }
.sheet {
  display: flow-root;
  height: 100%;
  padding: 0 0 0 148px;
  border: solid #d3d2d8;
  border-width: 0 1px;
  background: #fefefe;
  color: #111;
  font: 23px/30px var(--text);
  white-space: nowrap;
}
.sheet p { margin: 0 0 28px; }
/* scrolled so that the first line is half under the header bar */
.sheet p:first-child { margin-top: -13px; }
.pointer-at { position: relative; }
.ibeam { position: absolute; left: 0; bottom: -4px; }

/* Participants */
.people {
  display: grid;
  grid-template-columns: 1fr 270px 270px 270px 269px;
  height: 140px;
}
.audio-only { display: flex; justify-content: flex-end; align-items: center; background: #1b1b1b; }
.slot { display: flex; justify-content: center; width: 126px; }
.tile { display: flex; align-items: center; justify-content: center; }
.t1 { background: #3d3d3d; }
.t2 { background: #383838; }
.t3 { background: #343434; }
.t4 { background: radial-gradient(circle at 50% 46%, #5a4a80 0, #51446f 52px, #443a58 88px, #3b3444 130px); }
.ap { background: #faeccf; color: #835b0c; }
.al { background: #f7d1cd; color: #7a0f0f; }
.gs { background: #c7d1e8; color: #07135c; }
.gg { background: #ffe9d3; color: #8d5524; }
.cc { background: #ccd9df; color: #06373d; }
.avatar.more { border: 3px solid #1c1c1c; background: #424242; color: #fff; font-size: 9px; }
.speaking { padding: 4px; border: 4px solid #a78bfa; border-radius: 50%; background: #40365a; box-shadow: 0 6px 14px rgba(20, 15, 35, .4); }
```
